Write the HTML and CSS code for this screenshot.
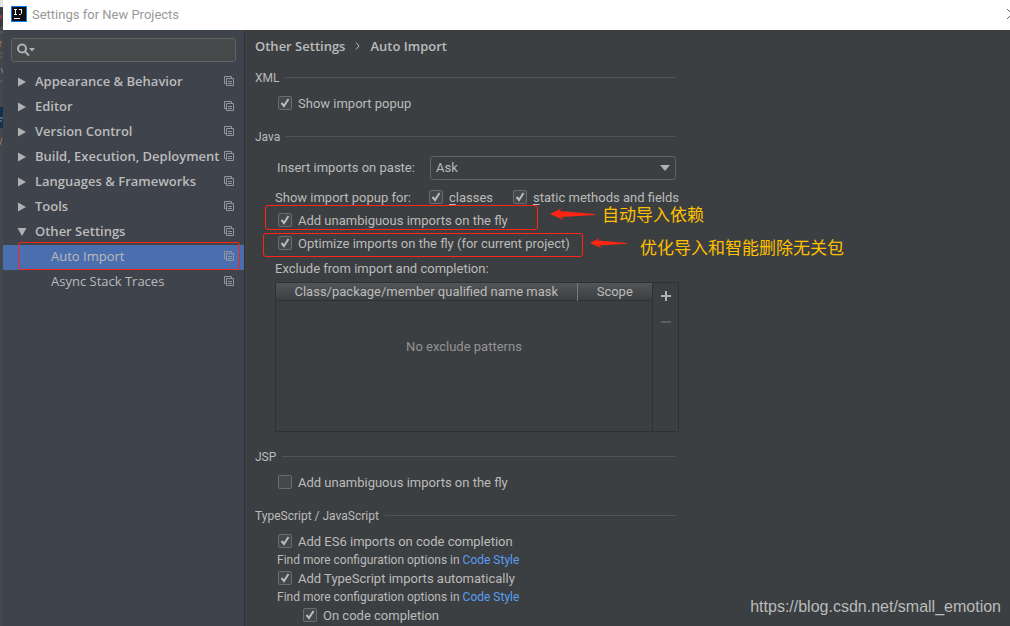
FILE: index.html
```html
<!DOCTYPE html>
<html lang="en">
<head>
<meta charset="utf-8">
<title>Settings for New Projects</title>
<link rel="stylesheet" href="styles.css">
</head>
<body>
<svg width="0" height="0" class="defs" aria-hidden="true">
  <symbol id="copy" viewBox="0 0 10 11"><path d="M2 7.500H.5v-7h7V2M2.500 2.500h7v7h-7zM4 5.500h4M4 7.500h4" fill="none" stroke="currentColor"/></symbol>
  <symbol id="right" viewBox="0 0 10 10"><path d="M1 .5v9L9 5z" fill="currentColor"/></symbol>
  <symbol id="down" viewBox="0 0 10 10"><path d="M.5 1h9L5 9z" fill="currentColor"/></symbol>
  <symbol id="arrow" viewBox="0 0 46 14"><path d="M0 7 12 1 9 4 45 7v1L11 10l3 3z" fill="#ff2413"/></symbol>
</svg>
<div class="screen">
  <div class="editor-edge">
    <svg width="3" height="626" aria-hidden="true"><path d="M0 0h3v7H0z" fill="#e4e4e4"/><path d="M0 8h3v22H0z" fill="#393c3e"/><path d="M0 15h2v4H0z" fill="#8c3c52"/><path d="M0 28h3M0 32h3M0 53h3M0 57h3M0 81h3" stroke="#626466"/><path d="M0 42h2M0 41v6" stroke="#b87445"/><path d="M1 68l2 5" stroke="#7b8790"/><path d="M0 107h3v21H0z" fill="#12314f"/><path d="M0 118h3M0 121h2" stroke="#8b98a4"/><path d="M2 138l-2 7" stroke="#a17552"/></svg>
  </div>
  <div class="dialog">
    <header class="titlebar">
      <svg width="16" height="16" viewBox="0 0 16 16" aria-hidden="true"><path d="M0 0h16v16H0z" fill="#087cfa"/><path d="M1 1h14v14H1z" fill="#111"/><path d="M3 3.500h3M3 8.500h3M4.500 3.500v5M8 3.500h3M10.500 3v4.500l-1 1H8" fill="none" stroke="#fff"/><path d="M3 12h6v1H3z" fill="#fff"/></svg>
      <h1>Settings for New Projects</h1>
      <button class="close" aria-label="Close"><svg width="10" height="10" viewBox="0 0 10 10"><path d="M0 0l10 10M10 0L0 10" stroke="#666"/></svg></button>
    </header>
    <div class="body">
      <aside class="sidebar">
        <div class="search">
          <svg width="20" height="14" viewBox="0 0 20 14" aria-hidden="true"><circle cx="6" cy="5.500" r="4" fill="none" stroke="#afb1b3" stroke-width="2"/><path d="M9 8.500l4 4" stroke="#afb1b3" stroke-width="2"/><path d="M13 5h6l-3 3.500z" fill="#afb1b3"/></svg>
          <input type="text" aria-label="Search settings">
        </div>
        <nav class="tree">
          <a href="#" class="node"><svg class="tri"><use href="#right"/></svg><span>Appearance &amp; Behavior</span><svg class="copy"><use href="#copy"/></svg></a>
          <a href="#" class="node"><svg class="tri"><use href="#right"/></svg><span>Editor</span><svg class="copy"><use href="#copy"/></svg></a>
          <a href="#" class="node"><svg class="tri"><use href="#right"/></svg><span>Version Control</span><svg class="copy"><use href="#copy"/></svg></a>
          <a href="#" class="node"><svg class="tri"><use href="#right"/></svg><span>Build, Execution, Deployment</span><svg class="copy"><use href="#copy"/></svg></a>
          <a href="#" class="node"><svg class="tri"><use href="#right"/></svg><span>Languages &amp; Frameworks</span><svg class="copy"><use href="#copy"/></svg></a>
          <a href="#" class="node"><svg class="tri"><use href="#right"/></svg><span>Tools</span><svg class="copy"><use href="#copy"/></svg></a>
          <a href="#" class="node"><svg class="tri"><use href="#down"/></svg><span>Other Settings</span><svg class="copy"><use href="#copy"/></svg></a>
          <a href="#" class="node leaf selected"><span>Auto Import</span><svg class="copy"><use href="#copy"/></svg><i class="mark mark-tree"></i></a>
          <a href="#" class="node leaf"><span>Async Stack Traces</span><svg class="copy"><use href="#copy"/></svg></a>
        </nav>
      </aside>
      <main class="content">
        <div class="crumbs"><span>Other Settings</span><svg width="5" height="8" viewBox="0 0 5 8" aria-hidden="true"><path d="M1 .5 4 4 1 7.500" fill="none" stroke="#bbb"/></svg><span>Auto Import</span></div>

        <h2>XML</h2>
        <div class="row"><label class="check"><input type="checkbox" checked>Show import popup</label></div>

        <h2>Java</h2>
        <div class="paste"><label for="paste">Insert imports on paste:</label><select id="paste"><option>Ask</option></select></div>
        <div class="row popup-for"><span>Show import popup for:</span><label class="check"><input type="checkbox" checked><span><u>c</u>lasses</span></label><label class="check"><input type="checkbox" checked><span><u>s</u>tatic methods and fields</span></label></div>
        <div class="row"><label class="check"><input type="checkbox" checked>Add unambiguous imports on the fly</label>
          <i class="mark mark-add"></i><div class="note note-add"><svg width="46" height="14"><use href="#arrow"/></svg><span lang="zh">自动导入依赖</span></div></div>
        <div class="row"><label class="check"><input type="checkbox" checked>Optimize imports on the fly (for current project)</label>
          <i class="mark mark-optimize"></i><div class="note note-optimize"><svg width="38" height="12" viewBox="0 0 46 14" preserveAspectRatio="none"><use href="#arrow"/></svg><span lang="zh">优化导入和智能删除无关包</span></div></div>
        <p class="caption">Exclude from import and completion:</p>
        <div class="excludes">
          <div class="list">
            <table><thead><tr><th>Class/package/member qualified name mask</th><th class="scope">Scope</th></tr></thead></table>
            <p class="empty">No exclude patterns</p>
          </div>
          <div class="tools">
            <button aria-label="Add"><svg width="10" height="10"><path d="M0 4h10v2H0zM4 0h2v10H4z" fill="#afb1b3"/></svg></button>
            <button aria-label="Remove" disabled><svg width="10" height="10"><path d="M0 4h10v2H0z" fill="#5c5f61"/></svg></button>
          </div>
        </div>

        <h2 class="after-table">JSP</h2>
        <div class="row"><label class="check"><input type="checkbox">Add unambiguous imports on the fly</label></div>

        <h2>TypeScript / JavaScript</h2>
        <div class="row"><label class="check"><input type="checkbox" checked>Add ES6 imports on code completion</label></div>
        <p class="hint">Find more configuration options in <a href="#">Code Style</a></p>
        <div class="row"><label class="check"><input type="checkbox" checked>Add TypeScript imports automatically</label></div>
        <p class="hint">Find more configuration options in <a href="#">Code Style</a></p>
        <div class="row nested"><label class="check"><input type="checkbox" checked>On code completion</label></div>
      </main>
    </div>
  </div>
  <div class="watermark">https://blog.csdn.net/small_emotion</div>
</div>
</body>
</html>
```

FILE: styles.css
```css
* { box-sizing: border-box; }
body { margin: 0; overflow: hidden; background: #3c3f41; color: #bbb; font: 13px/18px Roboto, "Noto Sans CJK SC", sans-serif; }
h1, h2, p { margin: 0; font-weight: 400; }
a { color: inherit; text-decoration: none; }
button { padding: 0; border: 0; background: none; }
svg { display: block; flex: none; }
.defs { position: absolute; }
.screen { position: relative; display: flex; height: 100vh; overflow: hidden; }
.editor-edge { flex: none; width: 3px; overflow: hidden; background: #45484a; }
.dialog { flex: 1; display: flex; flex-direction: column; min-width: 0; }

.titlebar { flex: none; display: flex; align-items: center; height: 30px; padding-left: 8px; gap: 5px; background: #fff; color: #999; overflow: hidden; }
.titlebar svg { margin-bottom: 2px; }
.titlebar h1 { flex: 1; font-size: 13px; }
.close { margin-right: -7px; }
.body { flex: 1; display: flex; min-height: 0; }

.sidebar { flex: none; width: 242px; padding-top: 8px; background: #3f434c; border-right: 1px solid #323536; }
.search { display: flex; align-items: center; height: 24px; margin: 0 8px 8px; padding-left: 4px; background: #45494a; border: 1px solid #646464; border-radius: 3px; }
.search input { flex: 1; min-width: 0; border: 0; outline: 0; background: none; color: #bbb; font: inherit; }
.node { position: relative; display: flex; align-items: center; height: 25px; padding: 0 10px 2px 14px; font-family: "Open Sans", sans-serif; font-weight: 600; }
.node span { flex: 1; padding-bottom: 1px; white-space: nowrap; }
.tri { width: 10px; height: 10px; margin-right: 8px; color: #afb1b3; }
.copy { width: 10px; height: 11px; color: #8e979f; }
.leaf { padding-left: 48px; font-weight: 400; }
.selected { background: #4b6eaf; }

.content { flex: 1; min-width: 0; padding: 6px 10px 0; }
.crumbs { display: flex; align-items: center; gap: 10px; height: 20px; font-family: "Open Sans", sans-serif; font-weight: 600; }
h2 { display: flex; align-items: center; gap: 6px; max-width: 421px; height: 18px; margin: 13px 0 5px; font-size: 12px; }
h2::after { content: ""; flex: 1; height: 1px; margin-bottom: 2px; background: #515456; }
.row { position: relative; display: flex; align-items: center; height: 23px; padding-left: 23px; white-space: nowrap; }
.nested { padding-left: 48px; }
.check { display: flex; align-items: center; gap: 6px; }
.check input { appearance: none; flex: none; width: 14px; height: 14px; margin: 0 0 1px; background: #43494a; border: 1px solid #6b6b6b; border-radius: 2px; }
.check input:checked { background: #43494a url("data:image/svg+xml,%3Csvg xmlns='http://www.w3.org/2000/svg' viewBox='0 0 12 12'%3E%3Cpath d='M2.500 6l2.500 3 4.500-7' fill='none' stroke='%23bbb' stroke-width='2'/%3E%3C/svg%3E") center / 12px 12px no-repeat; }
.paste { display: flex; align-items: center; max-width: 421px; margin: 10px 0 6px; padding-left: 22px; }
.paste label { width: 153px; }
.paste select { flex: 1; height: 24px; padding: 0 5px; appearance: none; border: 1px solid #646464; border-radius: 3px; color: #bbb; font: inherit; background: #3c3f41 url("data:image/svg+xml,%3Csvg xmlns='http://www.w3.org/2000/svg' viewBox='0 0 10 6'%3E%3Cpath d='M0 0h10L5 6z' fill='%23afb1b3'/%3E%3C/svg%3E") right 5px center / 10px 6px no-repeat; }
.popup-for { padding-left: 20px; }
.popup-for > span { width: 154px; }
.popup-for .check:last-child { margin-left: 20px; }
u { text-decoration-thickness: 1px; text-underline-offset: 2px; }
.caption { margin: 5px 0 4px; padding-left: 20px; }

.excludes { display: flex; max-width: 404px; height: 150px; margin-left: 20px; border: 1px solid #2f3133; }
.list { flex: 1; }
table { width: 100%; border-collapse: collapse; }
thead tr { height: 17px; background: linear-gradient(#515558, #3c3f41); border-bottom: 1px solid #2f3133; }
th { padding: 0; line-height: 17px; font-weight: 400; }
.scope { width: 75px; border-left: 1px solid #77797b; }
.empty { margin-top: 37px; text-align: center; color: #939393; }
.tools { width: 26px; display: flex; flex-direction: column; align-items: center; gap: 16px; padding-top: 8px; border-left: 1px solid #2f3133; }
.after-table { margin-top: 16px; }
.hint { padding-left: 22px; font-size: 12px; line-height: 14px; }
.hint a { color: #589df6; }

/* Annotations drawn over the dialog */
.mark { position: absolute; border: 1px solid #ff2413; border-radius: 3px; pointer-events: none; }
.mark-tree { left: 15px; right: 4px; top: -3px; height: 28px; }
.mark-add { left: 10px; width: 273px; top: -4px; height: 25px; }
.mark-optimize { left: 8px; width: 320px; top: 1px; height: 24px; }
.note { position: absolute; display: flex; align-items: center; color: #ffc000; font: 17px/24px "Noto Sans CJK SC", sans-serif; }
.note-add { left: 295px; top: -7px; gap: 6px; }
.note-optimize { left: 335px; top: 3px; gap: 12px; }
.note-optimize svg { margin-bottom: 8px; }
.watermark { position: absolute; right: 9px; bottom: 9px; color: #b9bbbc; font: 16px/20px "Liberation Sans", sans-serif; }
```
